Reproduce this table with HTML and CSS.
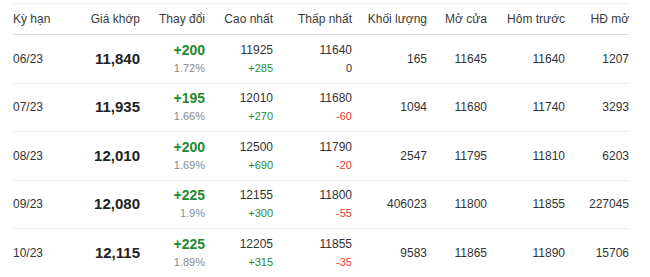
FILE: index.html
```html
<!DOCTYPE html>
<html lang="vi">
<head>
<meta charset="utf-8">
<title>Giá cà phê kỳ hạn</title>
<link rel="stylesheet" href="styles.css">
</head>
<body>
<div class="wrap">
<table class="futures">
  <colgroup>
    <col class="c1"><col class="c2"><col class="c3"><col class="c4"><col class="c5"><col class="c6"><col class="c7"><col class="c8"><col class="c9">
  </colgroup>
  <thead>
    <tr>
      <th class="left">Kỳ hạn</th>
      <th>Giá khớp</th>
      <th>Thay đổi</th>
      <th>Cao nhất</th>
      <th>Thấp nhất</th>
      <th>Khối lượng</th>
      <th>Mở cửa</th>
      <th>Hôm trước</th>
      <th>HĐ mở</th>
    </tr>
  </thead>
  <tbody>
    <tr>
      <td class="left">06/23</td>
      <td class="price">11,840</td>
      <td><div class="chg up">+200</div><div class="pct">1.72%</div></td>
      <td><div>11925</div><div class="sub up">+285</div></td>
      <td><div>11640</div><div class="sub">0</div></td>
      <td>165</td>
      <td>11645</td>
      <td>11640</td>
      <td>1207</td>
    </tr>
    <tr>
      <td class="left">07/23</td>
      <td class="price">11,935</td>
      <td><div class="chg up">+195</div><div class="pct">1.66%</div></td>
      <td><div>12010</div><div class="sub up">+270</div></td>
      <td><div>11680</div><div class="sub down">-60</div></td>
      <td>1094</td>
      <td>11680</td>
      <td>11740</td>
      <td>3293</td>
    </tr>
    <tr>
      <td class="left">08/23</td>
      <td class="price">12,010</td>
      <td><div class="chg up">+200</div><div class="pct">1.69%</div></td>
      <td><div>12500</div><div class="sub up">+690</div></td>
      <td><div>11790</div><div class="sub down">-20</div></td>
      <td>2547</td>
      <td>11795</td>
      <td>11810</td>
      <td>6203</td>
    </tr>
    <tr>
      <td class="left">09/23</td>
      <td class="price">12,080</td>
      <td><div class="chg up">+225</div><div class="pct">1.9%</div></td>
      <td><div>12155</div><div class="sub up">+300</div></td>
      <td><div>11800</div><div class="sub down">-55</div></td>
      <td>406023</td>
      <td>11800</td>
      <td>11855</td>
      <td>227045</td>
    </tr>
    <tr>
      <td class="left">10/23</td>
      <td class="price">12,115</td>
      <td><div class="chg up">+225</div><div class="pct">1.89%</div></td>
      <td><div>12205</div><div class="sub up">+315</div></td>
      <td><div>11855</div><div class="sub down">-35</div></td>
      <td>9583</td>
      <td>11865</td>
      <td>11890</td>
      <td>15706</td>
    </tr>
  </tbody>
</table>
</div>
</body>
</html>
```

FILE: styles.css
```css
html, body {
  margin: 0;
  padding: 0;
  background: #ffffff;
}
body {
  font-family: "Liberation Sans", Arial, sans-serif;
  color: #333333;
}
.wrap {
  padding: 3px 0 0 13px;
}
.futures {
  width: 616px;
  border-collapse: collapse;
  table-layout: fixed;
  border-top: 1px solid #eef0f4;
}
.c1 { width: 62px; }
.c2 { width: 65px; }
.c3 { width: 65px; }
.c4 { width: 68px; }
.c5 { width: 79px; }
.c6 { width: 75px; }
.c7 { width: 60px; }
.c8 { width: 78px; }
.c9 { width: 64px; }
.futures th {
  height: 30px;
  padding: 0;
  font-size: 12px;
  font-weight: normal;
  color: #3a3a3a;
  text-align: right;
  white-space: nowrap;
  vertical-align: middle;
  border-bottom: 1px solid #dde2e8;
}
.futures td {
  height: 47.5px;
  padding: 0;
  font-size: 12px;
  line-height: 18px;
  color: #333333;
  text-align: right;
  white-space: nowrap;
  vertical-align: middle;
  border-bottom: 1px solid #e9ecf0;
}
.futures .left {
  text-align: left;
}
.futures td.price {
  font-size: 15px;
  font-weight: bold;
  color: #222222;
}
.chg {
  font-size: 14px;
  font-weight: bold;
}
.pct {
  font-size: 11px;
  color: #8a8a8a;
}
.sub {
  font-size: 11px;
}
.up { color: #1f8a33; }
.down { color: #e53935; }
```
